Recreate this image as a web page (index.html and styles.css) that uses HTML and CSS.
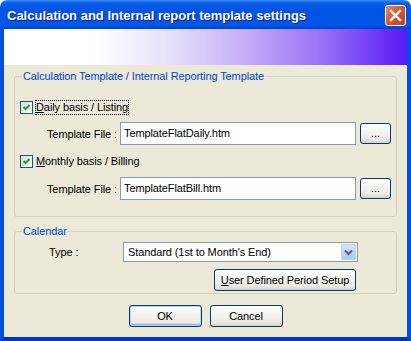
FILE: index.html
```html
<!DOCTYPE html>
<html lang="en">
<head>
    <meta charset="UTF-8">
    <title>Calculation and Internal report template settings</title>
    <link rel="stylesheet" href="styles.css">
</head>
<body>
    <div class="window">
        <div class="titlebar">
            <span class="title">Calculation and Internal report template settings</span>
            <button type="button" class="close-btn" aria-label="Close">
                <svg width="13" height="13" viewBox="0 0 13 13">
                    <path d="M2 2 L11 11 M11 2 L2 11" stroke="#fff" stroke-width="2.4" stroke-linecap="square" fill="none"/>
                </svg>
            </button>
        </div>

        <div class="frame">
            <div class="banner"></div>

            <div class="content">
                <div class="group group-templates">
                    <div class="group-title">Calculation Template / Internal Reporting Template</div>

                    <div class="check-row row-daily">
                        <span class="checkbox">
                            <svg width="11" height="11" viewBox="0 0 11 11"><path d="M2.5 5 L4.5 7 L8.5 3" stroke="#21a121" stroke-width="2" fill="none"/></svg>
                        </span>
                        <span class="check-label focused"><u>D</u>aily basis / Listing</span>
                    </div>

                    <div class="file-row row-file1">
                        <span class="field-label">Template File :</span>
                        <div class="textbox">TemplateFlatDaily.htm</div>
                        <button type="button" class="btn btn-browse">...</button>
                    </div>

                    <div class="check-row row-monthly">
                        <span class="checkbox">
                            <svg width="11" height="11" viewBox="0 0 11 11"><path d="M2.5 5 L4.5 7 L8.5 3" stroke="#21a121" stroke-width="2" fill="none"/></svg>
                        </span>
                        <span class="check-label"><u>M</u>onthly basis / Billing</span>
                    </div>

                    <div class="file-row row-file2">
                        <span class="field-label">Template File :</span>
                        <div class="textbox">TemplateFlatBill.htm</div>
                        <button type="button" class="btn btn-browse">...</button>
                    </div>
                </div>

                <div class="group group-calendar">
                    <div class="group-title">Calendar</div>

                    <div class="type-row">
                        <span class="type-label">Type :</span>
                        <div class="combo">
                            <span class="combo-text">Standard (1st to Month's End)</span>
                            <span class="combo-btn">
                                <svg width="9" height="7" viewBox="0 0 9 7"><path d="M1 1.5 L4.5 5 L8 1.5" stroke="#4d6185" stroke-width="2" fill="none"/></svg>
                            </span>
                        </div>
                    </div>

                    <div class="period-row">
                        <button type="button" class="btn btn-period"><u>U</u>ser Defined Period Setup</button>
                    </div>
                </div>

                <div class="dialog-buttons">
                    <button type="button" class="btn btn-dialog btn-default">OK</button>
                    <button type="button" class="btn btn-dialog">Cancel</button>
                </div>
            </div>
        </div>
    </div>
</body>
</html>
```

FILE: styles.css
```css
* {
    margin: 0;
    padding: 0;
    box-sizing: border-box;
}

body {
    background: #fff;
    font-family: 'Liberation Sans', Tahoma, Arial, sans-serif;
    font-size: 11px;
    letter-spacing: -0.1px;
    color: #000;
}

.window {
    width: 411px;
    height: 341px;
    display: flex;
    flex-direction: column;
}

/* Title bar */
.titlebar {
    height: 29px;
    flex: none;
    display: flex;
    align-items: center;
    justify-content: space-between;
    padding: 0 5px 0 7px;
    border-radius: 7px 7px 0 0;
    background: linear-gradient(to bottom, #3d8cf7 0%, #0a5fea 10%, #0055e5 30%, #0054e3 60%, #0058ec 85%, #0043cf 100%);
}

.title {
    color: #fff;
    font-weight: 700;
    font-size: 13px;
    letter-spacing: 0;
    text-shadow: 1px 1px 0 #0f1d8a;
    padding-top: 1px;
}

.close-btn {
    width: 21px;
    height: 21px;
    border: 1px solid #fff;
    border-radius: 3px;
    background: linear-gradient(135deg, #e88a6a 0%, #d8582f 45%, #c4411a 100%);
    display: flex;
    align-items: center;
    justify-content: center;
    margin-top: 1px;
}

/* Frame */
.frame {
    flex: 1;
    display: flex;
    flex-direction: column;
    border: 4px solid #0050e0;
    border-top: 0;
    border-bottom-color: #0035c4;
    background: #ece9d8;
}

.banner {
    height: 36px;
    flex: none;
    background: linear-gradient(90deg, #fff 0%, #fff 22%, #e9e2fb 40%, #c8b3f7 58%, #9a74f6 78%, #5a19f6 100%);
}

.content {
    flex: 1;
}

/* Group boxes */
.group {
    margin: 0 10px;
    border: 1px solid #d0d0bf;
    border-radius: 3px;
}

.group-templates {
    margin-top: 11px;
    padding-bottom: 16px;
}

.group-calendar {
    margin-top: 14px;
    padding-bottom: 2px;
}

.group-title {
    width: fit-content;
    margin: -7px 0 0 7px;
    padding: 0 1px;
    height: 13px;
    line-height: 13px;
    background: #ece9d8;
    color: #0046d5;
}

/* Checkbox rows */
.check-row {
    height: 15px;
    display: flex;
    align-items: center;
    padding-left: 5px;
}

.row-daily { margin-top: 17px; }
.row-monthly { margin-top: 9px; }

.checkbox {
    width: 13px;
    height: 13px;
    border: 1px solid #1c5180;
    background: linear-gradient(135deg, #dcdcd7 0%, #fff 100%);
    display: flex;
    align-items: center;
    justify-content: center;
}

.check-label {
    margin-left: 2px;
    padding: 1px 1px 2px;
    line-height: 12px;
}

.check-label.focused {
    outline: 1px dotted #000;
    outline-offset: -1px;
}

/* Template file rows */
.file-row {
    height: 23px;
    display: flex;
    align-items: center;
}

.row-file1 { margin-top: 7px; }
.row-file2 { margin-top: 8px; }

.field-label {
    width: 105px;
    text-align: right;
    padding-right: 3px;
}

.textbox {
    width: 236px;
    height: 23px;
    border: 1px solid #7f9db9;
    background: #fff;
    padding-left: 3px;
    line-height: 21px;
}

/* Buttons */
.btn {
    font-family: inherit;
    font-size: 11px;
    letter-spacing: inherit;
    color: #000;
    border: 1px solid #003c74;
    border-radius: 3px;
    background: linear-gradient(to bottom, #fff 0%, #f4f3ee 40%, #ecebe6 80%, #d6d0c5 100%);
    height: 21px;
}

.btn-browse {
    width: 31px;
    margin-left: 4px;
    line-height: 17px;
}

/* Calendar */
.type-row {
    margin-top: 4px;
    height: 20px;
    display: flex;
    align-items: center;
}

.type-label {
    width: 108px;
    padding-left: 34px;
}

.combo {
    width: 235px;
    height: 20px;
    border: 1px solid #7f9db9;
    background: #fff;
    display: flex;
    align-items: center;
    justify-content: space-between;
    padding: 0 1px 0 4px;
}

.combo-btn {
    width: 15px;
    height: 16px;
    border: 1px solid #b9cdf6;
    border-radius: 2px;
    background: linear-gradient(to bottom, #d9e5fd 0%, #c1d3fb 50%, #b0c6f8 100%);
    display: flex;
    align-items: center;
    justify-content: center;
}

.period-row {
    margin-top: 7px;
    display: flex;
    justify-content: flex-end;
    padding-right: 40px;
}

.btn-period {
    width: 142px;
    height: 22px;
}

/* Dialog buttons */
.dialog-buttons {
    margin-top: 11px;
    display: flex;
    justify-content: center;
    gap: 8px;
}

.btn-dialog {
    width: 73px;
    height: 22px;
}

.btn-default {
    box-shadow: inset 0 0 0 1px #bcd4f6, inset 0 -1px 0 1px #8eb0ef;
}
```
